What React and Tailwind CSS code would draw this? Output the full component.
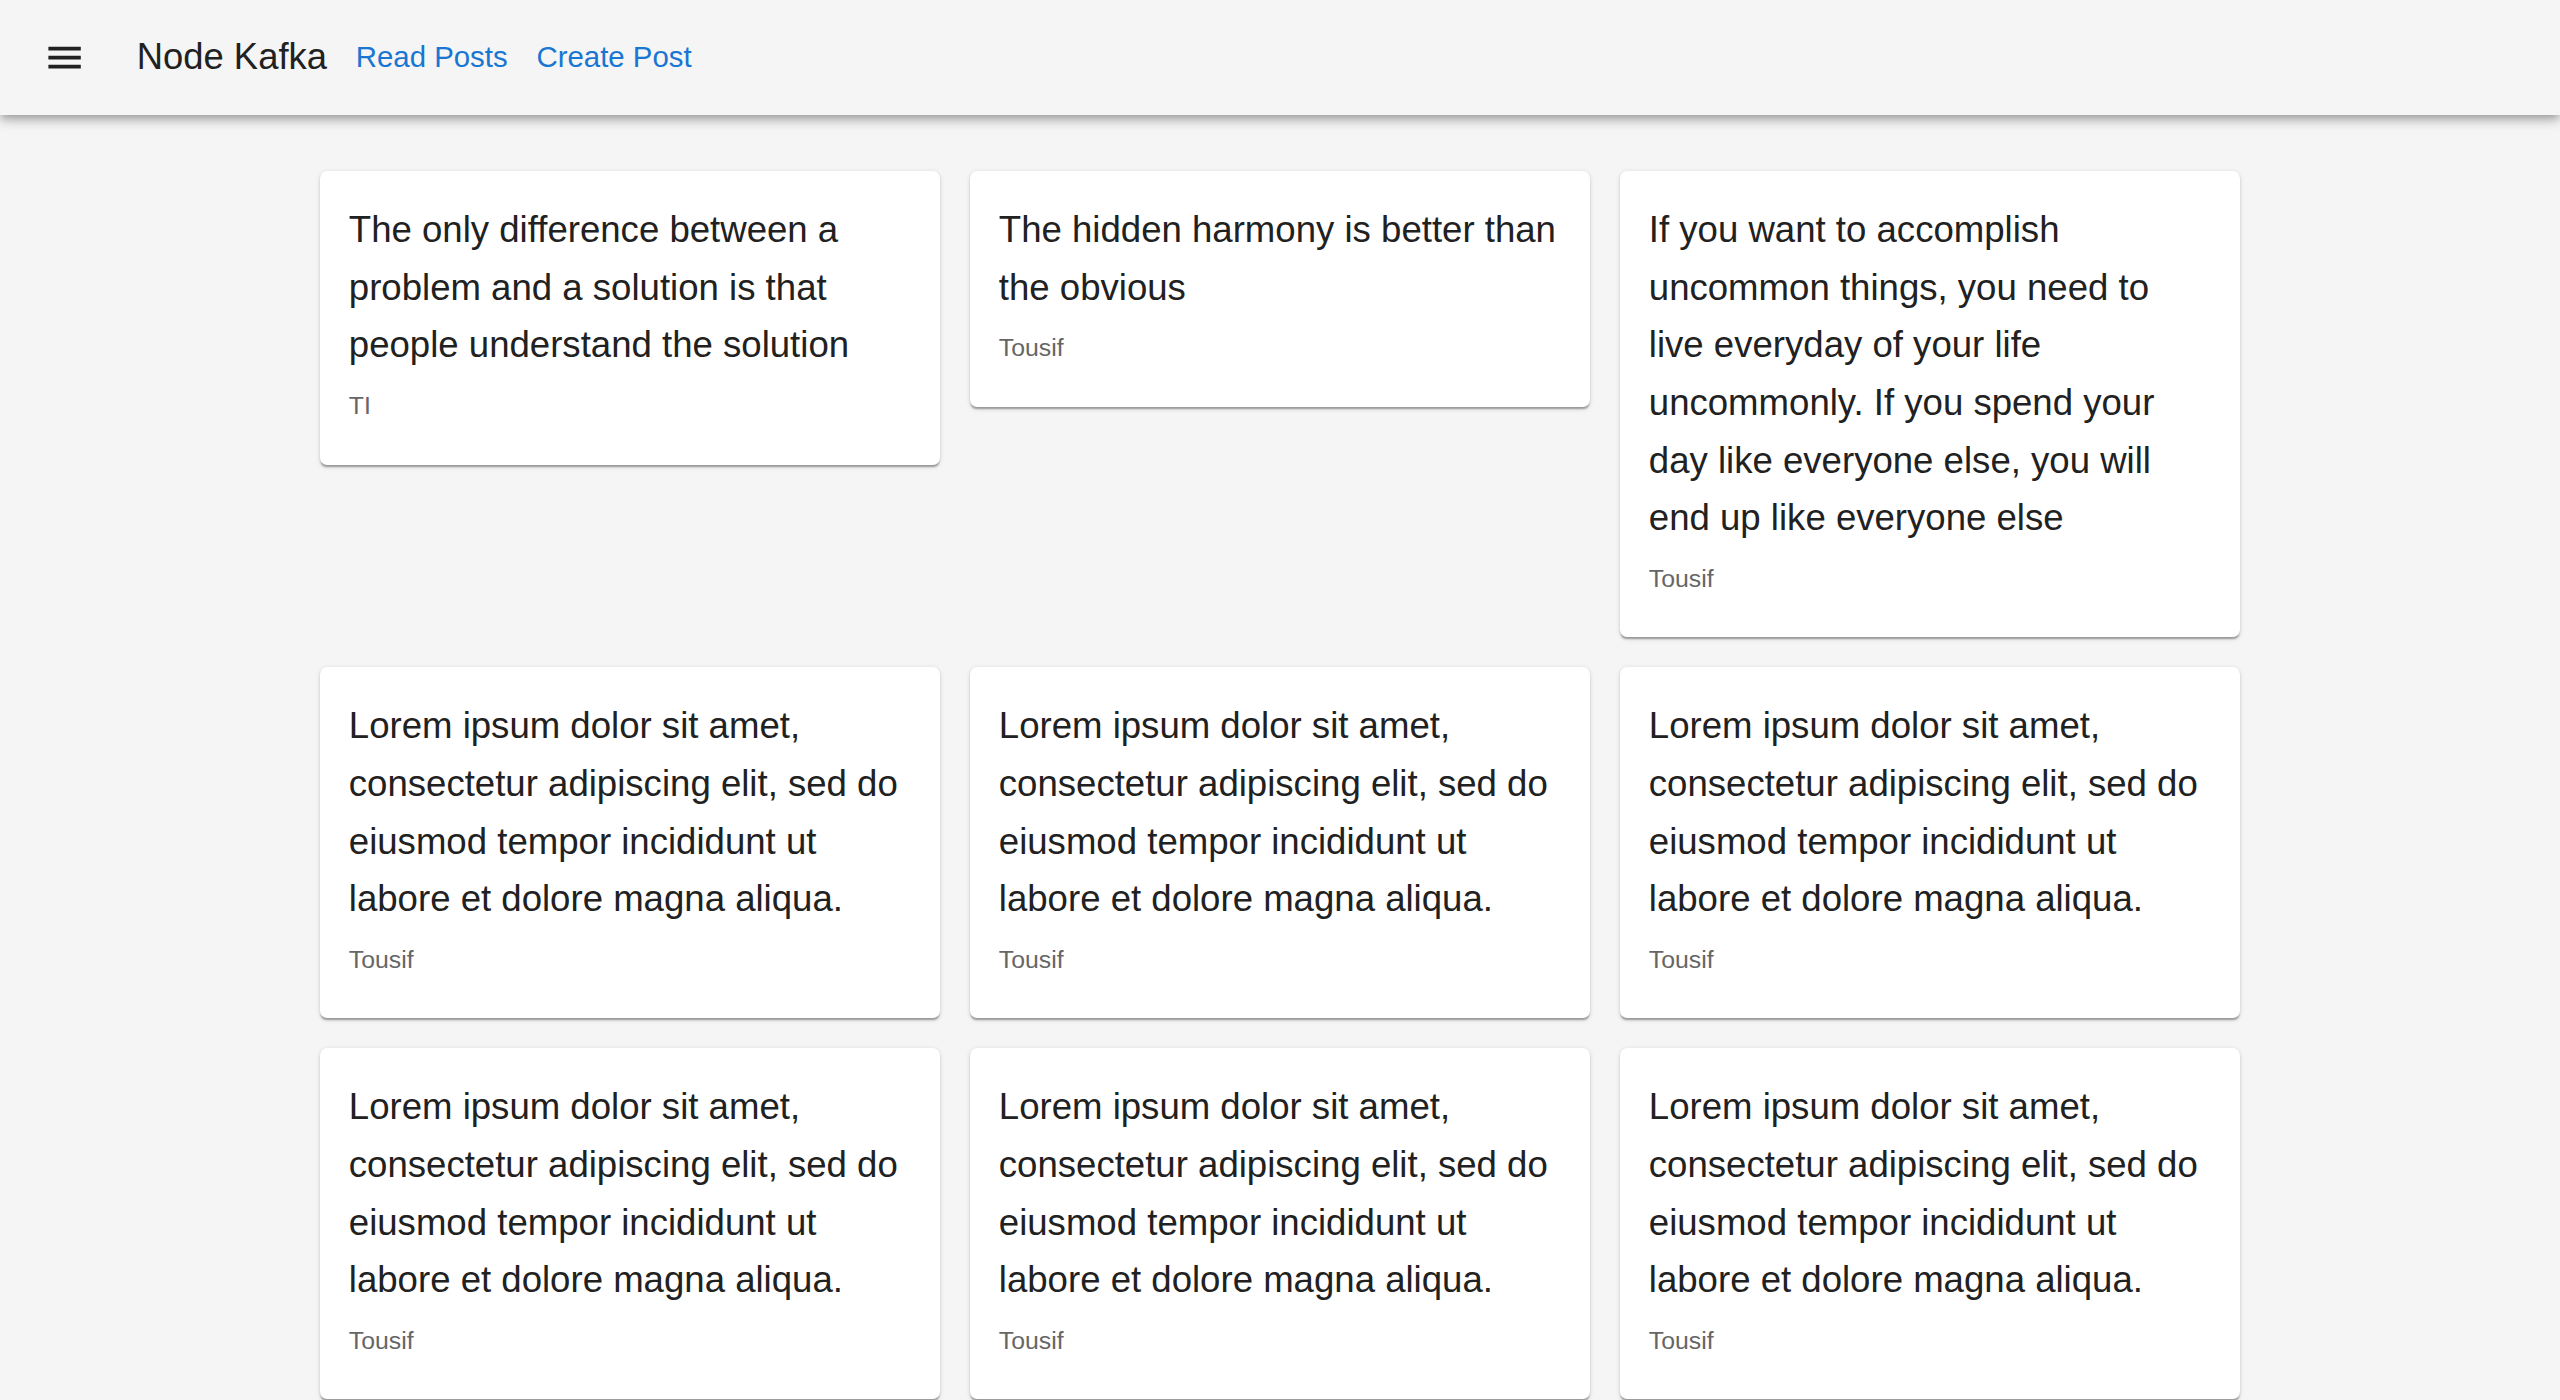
import React from "react";

const lorem =
  "Lorem ipsum dolor sit amet, consectetur adipiscing elit, sed do eiusmod tempor incididunt ut labore et dolore magna aliqua.";

const posts = [
  {
    id: 1,
    body: "The only difference between a problem and a solution is that people understand the solution",
    author: "TI",
  },
  { id: 2, body: "The hidden harmony is better than the obvious", author: "Tousif" },
  {
    id: 3,
    body: "If you want to accomplish uncommon things, you need to live everyday of your life uncommonly. If you spend your day like everyone else, you will end up like everyone else",
    author: "Tousif",
  },
  { id: 4, body: lorem, author: "Tousif" },
  { id: 5, body: lorem, author: "Tousif" },
  { id: 6, body: lorem, author: "Tousif" },
  { id: 7, body: lorem, author: "Tousif" },
  { id: 8, body: lorem, author: "Tousif" },
  { id: 9, body: lorem, author: "Tousif" },
];

const MenuIcon = () => (
  <svg viewBox="0 0 24 24" className="w-[43.2px] h-[43.2px] fill-[#212121]">
    <path d="M3 18h18v-2H3v2zm0-5h18v-2H3v2zm0-7v2h18V6H3z" />
  </svg>
);

const PostCard = ({ post }) => (
  <div className="bg-white rounded-[7.2px] shadow-[0_3.6px_1.8px_-1.8px_rgba(0,0,0,0.2),0_1.8px_1.8px_0_rgba(0,0,0,0.14),0_1.8px_5.4px_0_rgba(0,0,0,0.12)]">
    <div className="px-[28.8px] pt-[30px] pb-[40.6px]">
      <h6 className="text-[36.6px] leading-[57.6px] mb-[14px] text-[#212121]">
        {post.body}
      </h6>
      <p className="text-[24.8px] leading-[36px] text-[#666666]">{post.author}</p>
    </div>
  </div>
);

export default function App() {
  return (
    <div className="min-h-screen bg-[#f5f5f5] font-[family-name:'Liberation_Sans',Arial,sans-serif]">
      <header className="relative z-10 bg-[#f5f5f5] shadow-[0_3.6px_7.2px_-1.8px_rgba(0,0,0,0.2),0_7.2px_9px_0_rgba(0,0,0,0.14),0_1.8px_18px_0_rgba(0,0,0,0.12)]">
        <div className="h-[115.2px] px-[43.2px] flex items-center">
          <button className="p-[21.6px] -ml-[21.6px] mr-[28.8px] rounded-full">
            <MenuIcon />
          </button>
          <h6 className="text-[36.4px] leading-[57.6px] text-[#212121] -mt-[2px]">Node Kafka</h6>
          <a href="#" className="ml-[28.8px] text-[29.4px] leading-[43px] text-[#1976d2] -mt-[2px]">
            Read Posts
          </a>
          <a href="#" className="ml-[28.8px] text-[29.4px] leading-[43px] text-[#1976d2] -mt-[2px]">
            Create Post
          </a>
        </div>
      </header>
      <main className="max-w-[1920px] mx-auto pt-[56px] pb-[56px] grid grid-cols-3 gap-[30px] items-start">
        {posts.map((p) => (
          <PostCard key={p.id} post={p} />
        ))}
      </main>
    </div>
  );
}
